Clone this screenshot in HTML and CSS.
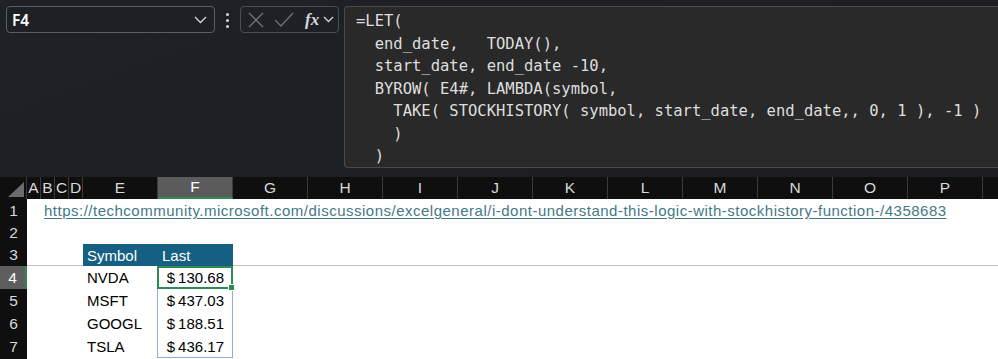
FILE: index.html
```html
<!DOCTYPE html>
<html lang="en">
<head>
<meta charset="utf-8">
<title>Excel STOCKHISTORY</title>
<link rel="stylesheet" href="styles.css">
</head>
<body>
<div class="toolbar">
  <div class="namebox">
    <span class="nb-text">F4</span>
    <svg class="chev" width="13" height="8" viewBox="0 0 13 8"><polyline points="1,1 6.5,6.5 12,1" fill="none" stroke="#cfd2d6" stroke-width="1.4"/></svg>
  </div>
  <div class="kebab"><span></span><span></span><span></span></div>
  <div class="fxbox">
    <svg class="ico-x" width="16" height="16" viewBox="0 0 16 16"><path d="M1 1 L15 15 M15 1 L1 15" stroke="#6f7378" stroke-width="1.3" fill="none"/></svg>
    <svg class="ico-check" width="20" height="15" viewBox="0 0 20 15"><polyline points="1,8 7,14 19,1" stroke="#6f7378" stroke-width="1.3" fill="none"/></svg>
    <span class="fx">fx</span>
    <svg class="chev-sm" width="11" height="7" viewBox="0 0 11 7"><polyline points="1,1 5.5,5.5 10,1" fill="none" stroke="#cfd2d6" stroke-width="1.3"/></svg>
  </div>
  <pre class="formula">=LET(
  end_date,   TODAY(),
  start_date, end_date -10,
  BYROW( E4#, LAMBDA(symbol,
    TAKE( STOCKHISTORY( symbol, start_date, end_date,, 0, 1 ), -1 )
    )
  )</pre>
</div>

<div class="sheet">
  <div class="corner"><svg width="18" height="16" viewBox="0 0 18 16"><polygon points="17,0 17,15 1,15" fill="#6b6b6b"/></svg></div>
  <div class="ch">A</div>
  <div class="ch">B</div>
  <div class="ch">C</div>
  <div class="ch">D</div>
  <div class="ch">E</div>
  <div class="ch sel">F</div>
  <div class="ch">G</div>
  <div class="ch">H</div>
  <div class="ch">I</div>
  <div class="ch">J</div>
  <div class="ch">K</div>
  <div class="ch">L</div>
  <div class="ch">M</div>
  <div class="ch">N</div>
  <div class="ch">O</div>
  <div class="ch">P</div>
  <div class="ch"></div>

  <div class="rh r1">1</div>
  <div class="rh r2">2</div>
  <div class="rh r3">3</div>
  <div class="rh r4 sel">4</div>
  <div class="rh r5">5</div>
  <div class="rh r6">6</div>
  <div class="rh r7">7</div>
  <div class="rh r8"></div>

  <div class="link">https://techcommunity.microsoft.com/discussions/excelgeneral/i-dont-understand-this-logic-with-stockhistory-function-/4358683</div>

  <div class="freeze"></div>

  <div class="thead"><span class="th-sym">Symbol</span><span class="th-last">Last</span></div>

  <div class="spill"></div>
  <div class="active"></div>

  <div class="sym r4">NVDA</div>
  <div class="sym r5">MSFT</div>
  <div class="sym r6">GOOGL</div>
  <div class="sym r7">TSLA</div>

  <div class="price r4">$&#8201;130.68</div>
  <div class="price r5">$&#8201;437.03</div>
  <div class="price r6">$&#8201;188.51</div>
  <div class="price r7">$&#8201;436.17</div>
</div>
</body>
</html>
```

FILE: styles.css
```css
html, body {
  margin: 0;
  padding: 0;
}

body {
  width: 998px;
  height: 359px;
  overflow: hidden;
  background: #1c2025;
  font-family: "Liberation Sans", Arial, sans-serif;
}

.toolbar {
  display: flex;
  align-items: flex-start;
  height: 177px;
  box-sizing: border-box;
  padding: 6px 0 0 6px;
  background: linear-gradient(160deg, #1e2227 0%, #1b1f24 100%);
  overflow: hidden;
}

.namebox {
  width: 209px;
  height: 27px;
  flex: none;
  box-sizing: border-box;
  border: 1px solid #5a5e63;
  border-radius: 4px;
  background: #1d2126;
  display: flex;
  align-items: center;
  justify-content: space-between;
  padding: 0 7px 0 5px;
  color: #ffffff;
  font: 600 15.5px "Noto Sans", "Open Sans", sans-serif;
}

.kebab {
  width: 25px;
  height: 27px;
  flex: none;
  display: flex;
  flex-direction: column;
  align-items: center;
  justify-content: center;
  gap: 3px;
  padding-top: 2px;
  box-sizing: border-box;
}

.kebab span {
  width: 3px;
  height: 3px;
  border-radius: 50%;
  background: #d4d6d9;
}

.fxbox {
  width: 99px;
  height: 27px;
  flex: none;
  box-sizing: border-box;
  border: 1px solid #4a4e53;
  border-radius: 4px;
  display: flex;
  align-items: center;
  padding-left: 7px;
}

.ico-x {
  margin-right: 10px;
}

.ico-check {
  margin-right: 11px;
}

.fx {
  font: italic 700 17px "Liberation Serif", serif;
  color: #d6d8db;
  margin-right: 4px;
}

.formula {
  flex: 1;
  min-width: 0;
  margin: 0 0 0 5px;
  height: 162px;
  box-sizing: border-box;
  background: #292929;
  border: 1px solid #4a4a4a;
  border-right: none;
  border-radius: 4px 0 0 4px;
  padding: 3px 0 0 11px;
  font: 15.5px/22.5px "DejaVu Sans Mono", "Liberation Mono", monospace;
  color: #dedede;
  white-space: pre;
  overflow: hidden;
}

.sheet {
  display: grid;
  grid-template-columns: 27px repeat(4, 14px) repeat(13, 75px);
  grid-template-rows: 22px 23px 22px 22px 23px 23px 23px 23px 1fr;
  width: 998px;
  height: 182px;
  overflow: hidden;
  background: #ffffff;
  font-size: 15px;
}

.corner {
  background: #0f0f0f;
  border-right: 1px solid #3c3c3c;
  display: flex;
  align-items: flex-end;
  justify-content: flex-end;
  padding: 0 1px 1px 0;
}

.ch {
  background: #0f0f0f;
  color: #d9d9d9;
  border-right: 1px solid #3c3c3c;
  text-align: center;
  line-height: 22px;
  font-size: 15.5px;
}

.ch.sel {
  background: #5b5b5b;
  color: #ffffff;
  border-bottom: 2px solid #2f8a52;
  line-height: 20px;
}

.rh {
  grid-column: 1;
  background: #0f0f0f;
  color: #d9d9d9;
  display: flex;
  align-items: center;
  justify-content: center;
  font-size: 15.5px;
}

.rh.sel {
  background: #5e5e5e;
  color: #ffffff;
  border-right: 2px solid #2f8a52;
}

.r1 { grid-row: 2; }
.r2 { grid-row: 3; }
.r3 { grid-row: 4; }
.r4 { grid-row: 5; }
.r5 { grid-row: 6; }
.r6 { grid-row: 7; }
.r7 { grid-row: 8; }
.r8 { grid-row: 9; }

.link {
  grid-row: 2;
  grid-column: 3 / -1;
  padding-left: 3px;
  color: #467886;
  text-decoration: underline;
  text-underline-offset: 2px;
  line-height: 23px;
  letter-spacing: 0.5px;
  white-space: nowrap;
}

.freeze {
  grid-row: 4;
  grid-column: 2 / -1;
  border-bottom: 1px solid #c2c2c2;
}

.thead {
  grid-row: 4;
  grid-column: 6 / 8;
  background: #156082;
  color: #ffffff;
  display: flex;
  align-items: center;
  height: 22px;
}

.th-sym {
  width: 75px;
  padding-left: 4px;
  box-sizing: border-box;
}

.th-last {
  padding-left: 4px;
}

.spill {
  grid-column: 7;
  grid-row: 5 / 9;
  margin-left: -1px;
  border: 1px solid #8eaee0;
}

.active {
  grid-column: 7;
  grid-row: 5;
  margin-left: -1px;
  border: 2px solid #2f8a52;
  position: relative;
}

.active::after {
  content: "";
  position: absolute;
  right: -4px;
  bottom: -4px;
  width: 5px;
  height: 5px;
  background: #2f8a52;
  border: 1px solid #ffffff;
}

.sym {
  grid-column: 6;
  padding-left: 4px;
  color: #000000;
  line-height: 23px;
}

.price {
  grid-column: 7;
  text-align: right;
  padding-right: 9px;
  color: #000000;
  line-height: 23px;
}
```
